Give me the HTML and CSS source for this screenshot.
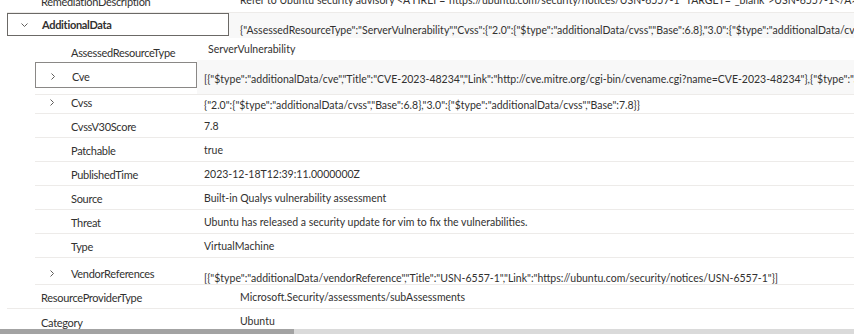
FILE: index.html
```html
<!DOCTYPE html>
<html lang="en">
<head>
    <meta charset="UTF-8">
    <meta name="viewport" content="width=device-width, initial-scale=1.0">
    <title>Sub-assessment details</title>
    <link rel="stylesheet" href="styles.css">
</head>
<body>
    <div class="page">
        <div class="tree">
            <div class="row top line r-remediation">
                <div class="key"><span class="key-text">RemediationDescription</span></div>
                <div class="val">Refer to Ubuntu security advisory &lt;A HREF="https://ubuntu.com/security/notices/USN-6557-1" TARGET="_blank"&gt;USN-6557-1&lt;/A&gt; to find more details about the updates.</div>
            </div>
            <div class="row top r-additional">
                <div class="key focused">
                    <span class="chev">
                        <svg width="7" height="4" viewBox="0 0 7 4"><path d="M0.5 0.5 L3.5 3.5 L6.5 0.5" fill="none" stroke="#605e5c" stroke-width="1"/></svg>
                    </span>
                    <span class="key-text strong">AdditionalData</span>
                </div>
                <div class="val shaded">{"AssessedResourceType":"ServerVulnerability","Cvss":{"2.0":{"$type":"additionalData/cvss","Base":6.8},"3.0":{"$type":"additionalData/cvss","Base":7.8}},"Cve":[{"$type":"additionalData/cve"}]}</div>
            </div>
            <div class="row child r-assessed">
                <div class="key"><span class="key-text">AssessedResourceType</span></div>
                <div class="val wide">ServerVulnerability</div>
            </div>
            <div class="row child line r-cve">
                <div class="key focused light">
                    <span class="chev">
                        <svg width="4" height="7" viewBox="0 0 4 7"><path d="M0.5 0.5 L3.5 3.5 L0.5 6.5" fill="none" stroke="#605e5c" stroke-width="1"/></svg>
                    </span>
                    <span class="key-text">Cve</span>
                </div>
                <div class="val shaded">[{"$type":"additionalData/cve","Title":"CVE-2023-48234","Link":"http://cve.mitre.org/cgi-bin/cvename.cgi?name=CVE-2023-48234"},{"$type":"additionalData/cve","Title":"CVE-2023-48235"}]</div>
            </div>
            <div class="row child line r-cvss">
                <div class="key">
                    <span class="chev">
                        <svg width="4" height="7" viewBox="0 0 4 7"><path d="M0.5 0.5 L3.5 3.5 L0.5 6.5" fill="none" stroke="#605e5c" stroke-width="1"/></svg>
                    </span>
                    <span class="key-text">Cvss</span>
                </div>
                <div class="val">{"2.0":{"$type":"additionalData/cvss","Base":6.8},"3.0":{"$type":"additionalData/cvss","Base":7.8}}</div>
            </div>
            <div class="row child line">
                <div class="key"><span class="key-text">CvssV30Score</span></div>
                <div class="val">7.8</div>
            </div>
            <div class="row child line">
                <div class="key"><span class="key-text">Patchable</span></div>
                <div class="val">true</div>
            </div>
            <div class="row child line">
                <div class="key"><span class="key-text">PublishedTime</span></div>
                <div class="val">2023-12-18T12:39:11.0000000Z</div>
            </div>
            <div class="row child line">
                <div class="key"><span class="key-text">Source</span></div>
                <div class="val">Built-in Qualys vulnerability assessment</div>
            </div>
            <div class="row child line">
                <div class="key"><span class="key-text">Threat</span></div>
                <div class="val">Ubuntu has released a security update for vim to fix the vulnerabilities.</div>
            </div>
            <div class="row child line">
                <div class="key"><span class="key-text">Type</span></div>
                <div class="val">VirtualMachine</div>
            </div>
            <div class="row child line r-vendor">
                <div class="key">
                    <span class="chev">
                        <svg width="4" height="7" viewBox="0 0 4 7"><path d="M0.5 0.5 L3.5 3.5 L0.5 6.5" fill="none" stroke="#605e5c" stroke-width="1"/></svg>
                    </span>
                    <span class="key-text">VendorReferences</span>
                </div>
                <div class="val">[{"$type":"additionalData/vendorReference","Title":"USN-6557-1","Link":"https://ubuntu.com/security/notices/USN-6557-1"}]</div>
            </div>
            <div class="row top line">
                <div class="key"><span class="key-text">ResourceProviderType</span></div>
                <div class="val">Microsoft.Security/assessments/subAssessments</div>
            </div>
            <div class="row top">
                <div class="key"><span class="key-text">Category</span></div>
                <div class="val">Ubuntu</div>
            </div>
        </div>
        <div class="hscroll">
            <div class="thumb"></div>
        </div>
    </div>
</body>
</html>
```

FILE: styles.css
```css
body {
    margin: 0;
    background-color: #fff;
    color: #323130;
    font-family: Lato, "Open Sans", sans-serif;
}
.page {
    height: 334px;
    display: flex;
    flex-direction: column;
    overflow: hidden;
}
.tree {
    flex: 1;
    overflow: hidden;
    margin-top: -12px;
}
.row {
    display: flex;
    box-sizing: border-box;
    height: 24px;
    white-space: nowrap;
}
.row.line {
    border-bottom: 1px solid #edebe9;
}
.row.top {
    margin-left: 7px;
}
.row.child {
    margin-left: 35px;
}
.key {
    box-sizing: border-box;
    flex: none;
    display: flex;
    align-items: center;
    padding-top: 2px;
    font-size: 11px;
    letter-spacing: -0.3px;
    position: relative;
}
.row.top .key {
    width: 222px;
    padding-left: 34px;
}
.row.child .key {
    width: 162px;
    padding-left: 36px;
}
.key.focused {
    border: 1px solid #6b6966;
}
.key.focused.light {
    border-color: #8a8886;
}
.key-text.strong {
    font-weight: 700;
}
.chev {
    position: absolute;
    display: flex;
}
.row.top .chev {
    left: 13px;
}
.row.child .chev {
    left: 15px;
}
.val {
    flex: 1;
    min-width: 0;
    overflow: hidden;
    display: flex;
    align-items: center;
    font-size: 10.5px;
}
.row.top .val {
    padding-left: 11px;
}
.row.child .val {
    padding-left: 7px;
}
.row.child .val.wide {
    padding-left: 11px;
}
.val.shaded {
    background-color: #f8f8f8;
}

/* row specific heights, the panel is a bit uneven */
.r-remediation {
    height: 25px;
}
.r-additional {
    height: 25px;
}
.r-additional .key {
    align-self: flex-start;
    height: 23px;
    padding-top: 0;
}
.r-additional .val {
    padding-top: 9px;
}
.r-assessed {
    height: 22px;
}
.r-assessed .key {
    padding-top: 6px;
}
.r-cve {
    height: 35px;
}
.r-cve .key {
    align-self: flex-start;
    height: 26px;
    margin-top: 2px;
}
.r-cve .val {
    padding-top: 4px;
}
.r-cvss {
    height: 19px;
}
.r-cvss .key {
    padding-top: 0;
    padding-bottom: 4px;
}
.r-cvss .val {
    padding-top: 2px;
}
.r-vendor {
    height: 27px;
}
.r-vendor .key {
    padding-top: 5px;
}
.r-vendor .val {
    padding-top: 13px;
}
.hscroll {
    height: 5px;
    flex: none;
    background-color: #dadada;
}
.thumb {
    width: 294px;
    height: 100%;
    background-color: #a3a3a3;
}
```
